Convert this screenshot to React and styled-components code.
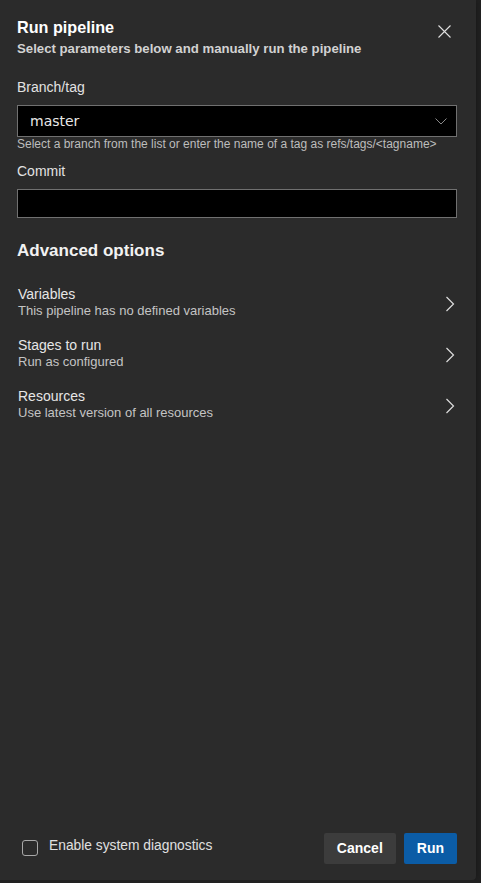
import React from "react";
import styled, { createGlobalStyle } from "styled-components";

const Global = createGlobalStyle`
  html, body { margin: 0; padding: 0; background: #212121; }
  body { font-family: "Liberation Sans", Arial, sans-serif; }
  * { box-sizing: border-box; }
`;

const Panel = styled.div`
  width: 476px;
  height: 880px;
  background: #2b2b2b;
  border-bottom-right-radius: 4px;
  box-shadow: 0 0 6px rgba(0, 0, 0, 0.35);
  display: flex;
  flex-direction: column;
  color: #e6e6e6;
`;

const Header = styled.div`
  display: flex;
  justify-content: space-between;
  align-items: flex-start;
  padding: 16px 19px 0 17px;
`;

const TitleBlock = styled.div`
  display: flex;
  flex-direction: column;
  gap: 2px;
`;

const Title = styled.div`
  font-size: 16.2px;
  line-height: 22px;
  font-weight: 700;
  color: #ffffff;
`;

const Subtitle = styled.div`
  font-size: 13.2px;
  line-height: 18px;
  font-weight: 700;
  color: #d2d2d2;
`;

const CloseButton = styled.button`
  background: none;
  border: none;
  padding: 0;
  margin: 9px 6px 0 0;
  width: 13px;
  height: 13px;
  display: flex;
  cursor: pointer;
`;

const Body = styled.div`
  flex: 1;
  display: flex;
  flex-direction: column;
  padding: 0 19px 0 17px;
`;

const Label = styled.div`
  font-size: 14px;
  line-height: 20px;
  color: #e2e2e2;
  margin-top: ${(p) => p.$mt}px;
`;

const InputBox = styled.div`
  margin-top: 8px;
  height: ${(p) => p.$h}px;
  background: #000;
  border: 1px solid #707070;
  display: flex;
  align-items: center;
  justify-content: space-between;
  padding: 0 9px 0 12px;
`;

const InputText = styled.span`
  font-family: "DejaVu Sans", sans-serif;
  font-size: 14px;
  color: #e8e8e8;
`;

const Helper = styled.div`
  font-size: 12px;
  line-height: 14px;
  color: #bdbdbd;
`;

const SectionTitle = styled.div`
  margin-top: 21px;
  font-size: 17px;
  line-height: 24px;
  font-weight: 700;
  color: #f2f2f2;
`;

const OptionList = styled.div`
  margin-top: 13px;
  display: flex;
  flex-direction: column;
`;

const OptionRow = styled.div`
  display: flex;
  align-items: center;
  justify-content: space-between;
  padding: 8.5px 2px 8.5px 1px;
  cursor: pointer;
`;

const OptionText = styled.div`
  display: flex;
  flex-direction: column;
`;

const OptionTitle = styled.div`
  font-size: 14px;
  line-height: 18px;
  color: #e6e6e6;
`;

const OptionSub = styled.div`
  font-size: 13px;
  line-height: 16px;
  color: #c4c4c4;
`;

const ChevronWrap = styled.span`
  display: flex;
  margin-top: 4px;
`;

const Footer = styled.div`
  display: flex;
  align-items: center;
  justify-content: space-between;
  padding: 0 19px 16px 22px;
`;

const CheckLabel = styled.label`
  display: flex;
  align-items: center;
  gap: 11px;
  font-size: 13.8px;
  line-height: 16px;
  color: #e0e0e0;
  margin-top: -2px;
`;

const CheckText = styled.span`
  margin-top: -3px;
`;

const CheckBox = styled.span`
  width: 16px;
  height: 16px;
  border: 1px solid #a8a8a8;
  border-radius: 3px;
  display: inline-block;
`;

const Buttons = styled.div`
  display: flex;
  gap: 8px;
`;

const Button = styled.button`
  height: 31px;
  padding: 0 13px 1px;
  border: none;
  border-radius: 2px;
  font-family: "Liberation Sans", Arial, sans-serif;
  font-size: 14px;
  font-weight: 700;
  color: #ffffff;
  background: ${(p) => (p.$primary ? "#0b5ca6" : "#3c3c3c")};
  cursor: pointer;
`;

const Chevron = () => (
  <ChevronWrap>
    <svg width="10" height="16" viewBox="0 0 10 16" fill="none">
      <path d="M1.5 1 L8.5 8 L1.5 15" stroke="#dcdcdc" strokeWidth="1.2" />
    </svg>
  </ChevronWrap>
);

const options = [
  { title: "Variables", sub: "This pipeline has no defined variables" },
  { title: "Stages to run", sub: "Run as configured" },
  { title: "Resources", sub: "Use latest version of all resources" },
];

export default function App() {
  return (
    <>
      <Global />
      <Panel>
        <Header>
          <TitleBlock>
            <Title>Run pipeline</Title>
            <Subtitle>Select parameters below and manually run the pipeline</Subtitle>
          </TitleBlock>
          <CloseButton aria-label="Close">
            <svg width="13" height="13" viewBox="0 0 13 13">
              <path d="M0.5 0.5 L12.5 12.5 M12.5 0.5 L0.5 12.5" stroke="#e0e0e0" strokeWidth="1.1" />
            </svg>
          </CloseButton>
        </Header>
        <Body>
          <Label $mt={19}>Branch/tag</Label>
          <InputBox $h={32}>
            <InputText>master</InputText>
            <svg width="12" height="7" viewBox="0 0 12 7" fill="none">
              <path d="M0.5 0.5 L6 6 L11.5 0.5" stroke="#8a8a8a" strokeWidth="1" />
            </svg>
          </InputBox>
          <Helper>Select a branch from the list or enter the name of a tag as refs/tags/&lt;tagname&gt;</Helper>
          <Label $mt={10}>Commit</Label>
          <InputBox $h={29} />
          <SectionTitle>Advanced options</SectionTitle>
          <OptionList>
            {options.map((o) => (
              <OptionRow key={o.title}>
                <OptionText>
                  <OptionTitle>{o.title}</OptionTitle>
                  <OptionSub>{o.sub}</OptionSub>
                </OptionText>
                <Chevron />
              </OptionRow>
            ))}
          </OptionList>
        </Body>
        <Footer>
          <CheckLabel>
            <CheckBox />
            <CheckText>Enable system diagnostics</CheckText>
          </CheckLabel>
          <Buttons>
            <Button>Cancel</Button>
            <Button $primary>Run</Button>
          </Buttons>
        </Footer>
      </Panel>
    </>
  );
}
